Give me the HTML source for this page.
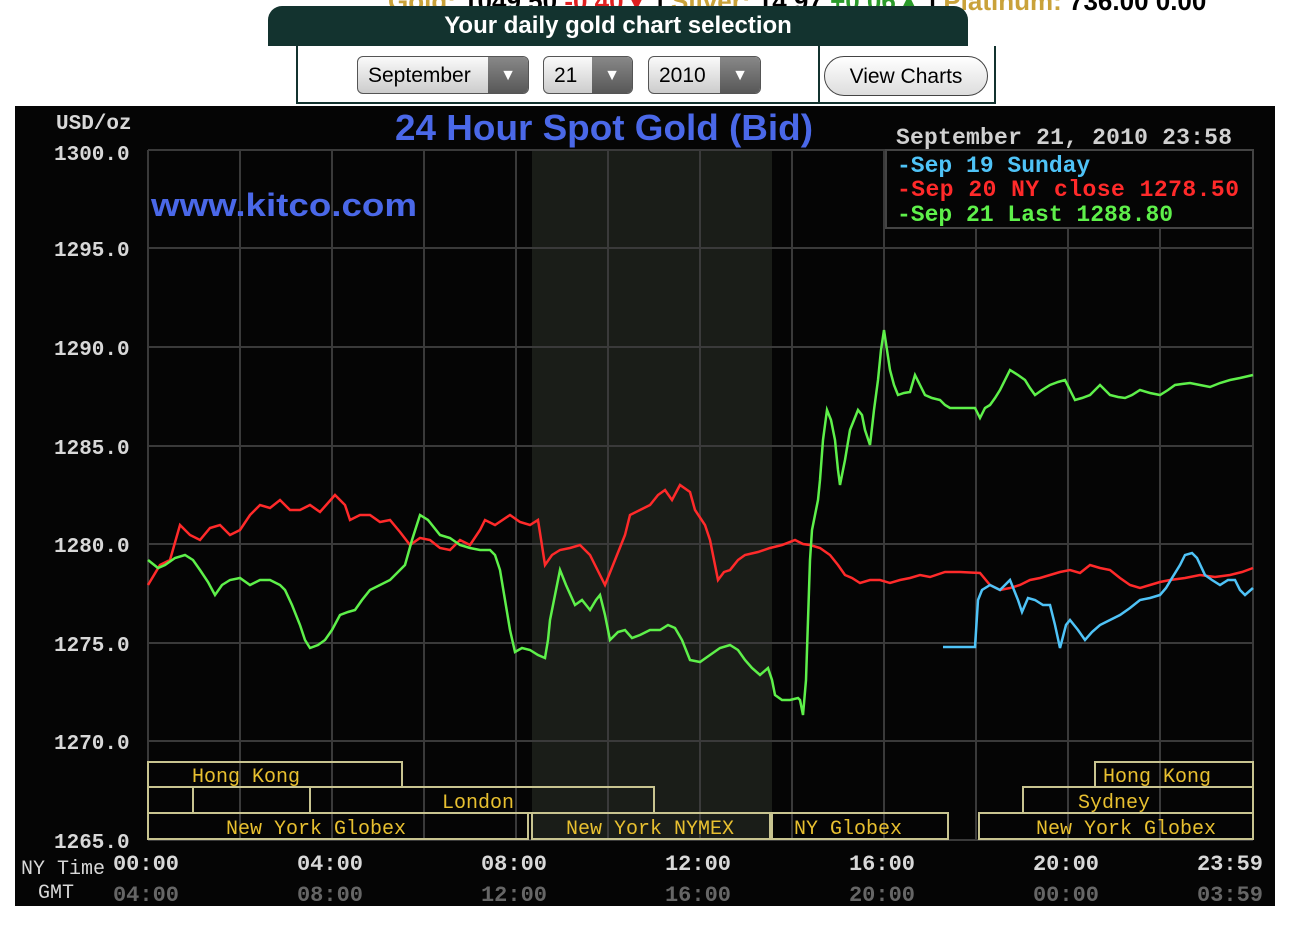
<!DOCTYPE html>
<html><head><meta charset="utf-8"><style>
body{margin:0;width:1290px;height:928px;background:#fff;overflow:hidden;position:relative;font-family:"Liberation Sans",sans-serif}
.tick{position:absolute;top:-14px;left:388px;font-size:26px;font-weight:bold;white-space:nowrap}
.tab{position:absolute;left:268px;top:6px;width:700px;height:40px;background:#13332f;border-radius:14px 14px 0 0;color:#fff;font-weight:bold;font-size:24px;text-align:center;line-height:40px}
.form{position:absolute;left:296px;top:46px;width:696px;height:56px;border:2px solid #13332f;border-top:none}
.sep{position:absolute;left:520px;top:0;width:2px;height:58px;background:#13332f}
.sel{position:absolute;top:10px;height:38px;border:1px solid #555;border-radius:6px;background:linear-gradient(#fafafa,#ccc);font-size:21px;line-height:38px;padding-left:10px;box-sizing:border-box;overflow:hidden}
.sel b{position:absolute;right:0;top:0;width:40px;height:38px;background:linear-gradient(#888,#555);color:#fff;text-align:center;font-size:16px;line-height:38px}
.btn{position:absolute;left:526px;top:10px;width:164px;height:40px;border:1px solid #444;border-radius:20px;background:linear-gradient(#fff,#ddd);font-size:21px;text-align:center;line-height:40px;box-sizing:border-box}
</style></head><body>
<div class="tick"><span style="color:#c9a23a">Gold:</span> 1049.50 <span style="color:#e02020">-0.40▼</span> | <span style="color:#c9a23a">Silver:</span> 14.97 <span style="color:#2a9a2a">+0.06▲</span> | <span style="color:#c9a23a">Platinum:</span> 736.00 0.00</div>
<div class="tab">Your daily gold chart selection</div>
<div class="form">
<div class="sel" style="left:59px;width:172px">September<b>▼</b></div>
<div class="sel" style="left:245px;width:90px">21<b>▼</b></div>
<div class="sel" style="left:350px;width:113px">2010<b>▼</b></div>
<div class="sep"></div>
<div class="btn">View Charts</div>
</div>
<svg style="position:absolute;left:0;top:0" width="1290" height="928">
<rect x="15" y="106" width="1260" height="800" fill="#050505"/>
<rect x="532" y="150" width="240" height="690" fill="#1a1d18"/>
<g stroke="#3a3a3a" stroke-width="2">
<line x1="148" y1="150" x2="1253" y2="150"/><line x1="148" y1="248" x2="1253" y2="248"/><line x1="148" y1="347" x2="1253" y2="347"/><line x1="148" y1="446" x2="1253" y2="446"/><line x1="148" y1="544" x2="1253" y2="544"/><line x1="148" y1="643" x2="1253" y2="643"/><line x1="148" y1="741" x2="1253" y2="741"/><line x1="148" y1="840" x2="1253" y2="840"/>
<line x1="148" y1="150" x2="148" y2="840"/><line x1="240" y1="150" x2="240" y2="840"/><line x1="332" y1="150" x2="332" y2="840"/><line x1="424" y1="150" x2="424" y2="840"/><line x1="516" y1="150" x2="516" y2="840"/><line x1="608" y1="150" x2="608" y2="840"/><line x1="700" y1="150" x2="700" y2="840"/><line x1="792" y1="150" x2="792" y2="840"/><line x1="884" y1="150" x2="884" y2="840"/><line x1="976" y1="150" x2="976" y2="840"/><line x1="1068" y1="150" x2="1068" y2="840"/><line x1="1160" y1="150" x2="1160" y2="840"/><line x1="1253" y1="150" x2="1253" y2="840"/>
</g>
<rect x="886" y="150" width="367" height="78" fill="#050505" stroke="#444" stroke-width="2"/>
<g fill="none" stroke="#c8c490" stroke-width="2">
<rect x="148" y="762" width="254" height="25"/><rect x="1095" y="762" width="158" height="25"/>
<rect x="148" y="787" width="45" height="26"/><rect x="193" y="787" width="117" height="26"/><rect x="310" y="787" width="344" height="26"/><rect x="1023" y="787" width="230" height="26"/>
<rect x="148" y="813" width="380" height="26"/><rect x="532" y="813" width="238" height="26"/><rect x="772" y="813" width="176" height="26"/><rect x="979" y="813" width="274" height="26"/>
</g>
<g fill="#e8c030" font-family="Liberation Mono,monospace" font-size="20" text-anchor="middle">
<text x="246" y="782">Hong Kong</text><text x="1157" y="782">Hong Kong</text>
<text x="478" y="808">London</text><text x="1114" y="808">Sydney</text>
<text x="316" y="834">New York Globex</text><text x="650" y="834">New York NYMEX</text><text x="848" y="834">NY Globex</text><text x="1126" y="834">New York Globex</text>
</g>
<polyline fill="none" stroke="#ff2a2a" stroke-width="2.5" points="148,585 160,565 170,560 180,525 190,535 200,540 210,528 220,525 230,535 240,530 250,515 260,505 270,508 280,500 290,510 300,510 310,505 320,512 335,495 345,505 350,520 360,515 370,515 380,522 390,520 400,532 410,545 420,538 430,540 440,548 450,550 460,540 470,545 480,530 485,520 495,525 510,515 520,522 530,525 538,520 545,565 552,555 560,550 570,548 580,545 590,555 595,565 605,585 615,560 625,535 630,515 640,510 650,505 658,495 665,490 672,500 680,485 690,492 695,510 705,525 710,540 718,580 724,572 730,570 738,560 745,555 758,552 770,548 782,545 795,540 803,544 810,545 820,548 830,555 838,565 845,575 852,578 860,583 870,580 880,580 890,583 900,580 910,578 920,575 930,577 945,572 960,572 980,573 990,585 1000,590 1010,588 1020,585 1030,580 1040,578 1050,575 1060,572 1070,570 1080,573 1090,565 1100,568 1110,570 1120,578 1130,585 1140,588 1150,585 1160,582 1170,580 1185,578 1200,575 1215,577 1230,575 1242,572 1253,568"/>
<polyline fill="none" stroke="#4fc3f7" stroke-width="2.5" points="943,647 975,647 978,600 982,590 990,585 1000,590 1010,580 1018,600 1022,612 1028,598 1035,600 1043,605 1050,605 1055,625 1060,648 1066,625 1070,620 1078,630 1085,640 1092,632 1100,625 1110,620 1120,615 1130,608 1140,600 1150,598 1160,595 1166,588 1172,578 1180,565 1185,555 1192,553 1197,558 1205,575 1212,580 1220,585 1228,580 1235,580 1240,590 1245,595 1253,588"/>
<polyline fill="none" stroke="#5ef04a" stroke-width="2.5" points="148,560 158,568 165,565 175,558 185,555 193,560 200,570 208,582 215,595 222,585 230,580 240,578 250,585 260,580 270,580 280,585 285,590 292,605 300,625 305,640 310,648 318,645 325,640 332,630 340,615 348,612 355,610 362,600 370,590 380,585 390,580 398,572 405,565 412,540 420,515 428,520 440,535 450,538 460,545 470,548 480,550 490,550 495,555 500,570 505,600 510,630 515,652 522,648 530,650 538,655 545,658 548,640 550,620 555,595 560,570 566,585 575,605 582,600 590,610 596,600 600,595 605,615 610,640 618,632 625,630 632,638 640,635 650,630 660,630 668,625 675,628 682,640 690,660 700,662 710,655 720,648 730,645 738,650 745,660 752,668 760,675 768,668 772,680 775,695 782,700 790,700 798,698 800,700 803,715 806,680 808,620 810,560 812,530 815,515 818,500 820,480 823,440 827,410 831,420 835,440 838,470 840,485 845,460 850,430 854,420 858,410 862,415 865,430 870,445 874,410 878,380 881,350 884,330 887,350 890,370 894,385 898,395 904,393 910,392 915,375 920,385 925,395 932,398 940,400 945,405 950,408 962,408 975,408 980,418 985,408 990,405 995,398 1000,390 1005,380 1010,370 1018,375 1025,380 1030,388 1035,395 1042,390 1050,385 1058,382 1065,380 1070,390 1075,400 1082,398 1090,395 1095,390 1100,385 1105,390 1110,395 1118,397 1125,398 1132,395 1140,390 1150,393 1160,395 1168,390 1175,385 1182,384 1190,383 1200,385 1210,387 1220,383 1230,380 1240,378 1253,375"/>
<g font-family="Liberation Mono,monospace" font-weight="bold" font-size="21" fill="#d8d8d8">
<text x="56" y="129">USD/oz</text>
<text x="54" y="160">1300.0</text><text x="54" y="256">1295.0</text><text x="54" y="355">1290.0</text><text x="54" y="454">1285.0</text><text x="54" y="552">1280.0</text><text x="54" y="651">1275.0</text><text x="54" y="749">1270.0</text><text x="54" y="848">1265.0</text>
</g>
<g font-family="Liberation Mono,monospace" font-weight="bold" font-size="22" fill="#d8d8d8" text-anchor="middle">
<text x="146" y="870">00:00</text><text x="330" y="870">04:00</text><text x="514" y="870">08:00</text><text x="698" y="870">12:00</text><text x="882" y="870">16:00</text><text x="1066" y="870">20:00</text><text x="1230" y="870">23:59</text>
</g>
<g font-family="Liberation Mono,monospace" font-weight="bold" font-size="22" fill="#666" text-anchor="middle">
<text x="146" y="901">04:00</text><text x="330" y="901">08:00</text><text x="514" y="901">12:00</text><text x="698" y="901">16:00</text><text x="882" y="901">20:00</text><text x="1066" y="901">00:00</text><text x="1230" y="901">03:59</text>
</g>
<g font-family="Liberation Mono,monospace" font-size="20" fill="#d8d8d8">
<text x="21" y="874">NY Time</text><text x="38" y="898">GMT</text>
</g>
<text x="604" y="140" text-anchor="middle" font-family="Liberation Sans,sans-serif" font-weight="bold" font-size="36" fill="#4a68e8" textLength="418" lengthAdjust="spacingAndGlyphs">24 Hour Spot Gold (Bid)</text>
<text x="151" y="216" font-family="Liberation Sans,sans-serif" font-weight="bold" font-size="32" fill="#4a68e8" textLength="266" lengthAdjust="spacingAndGlyphs">www.kitco.com</text>
<g font-family="Liberation Mono,monospace" font-weight="bold" font-size="23">
<text x="896" y="144" fill="#d0d0d0" textLength="336">September 21, 2010 23:58</text>
<text x="897" y="172" fill="#4fc3f7">-Sep 19 Sunday</text>
<text x="897" y="196" fill="#ff2a2a" textLength="342">-Sep 20 NY close 1278.50</text>
<text x="897" y="221" fill="#5ef04a">-Sep 21 Last 1288.80</text>
</g>
</svg>
</body></html>
